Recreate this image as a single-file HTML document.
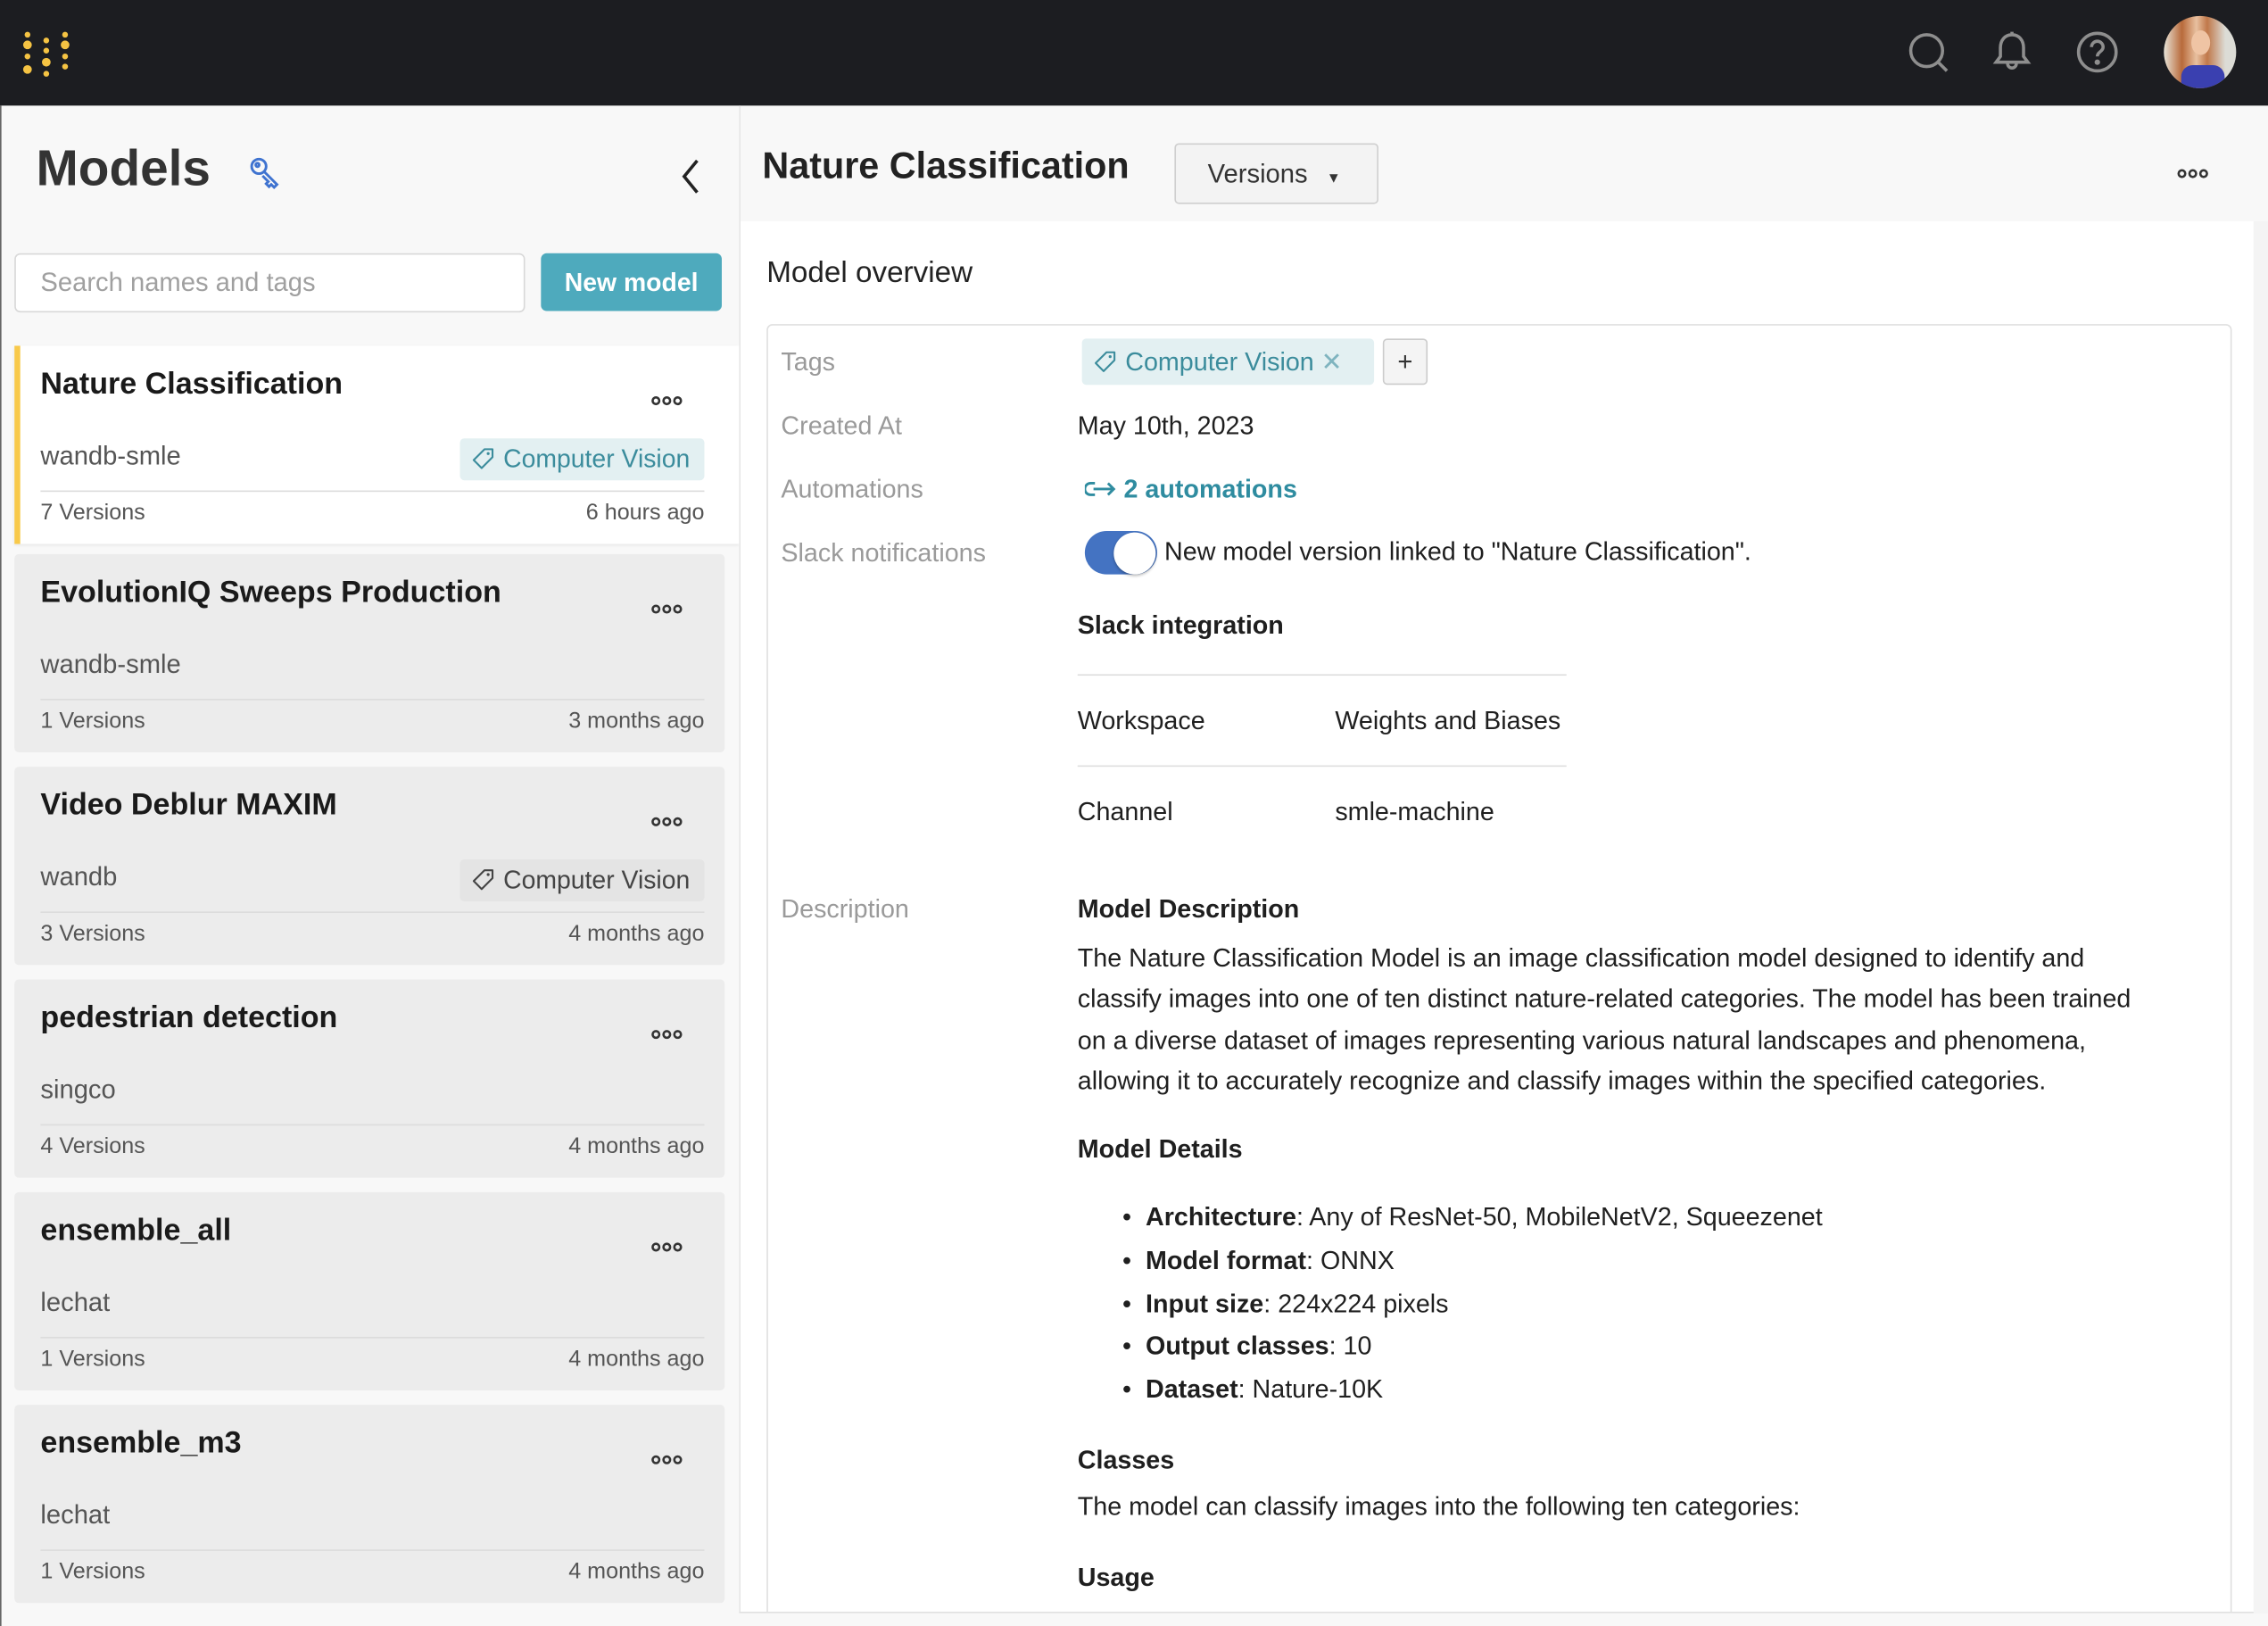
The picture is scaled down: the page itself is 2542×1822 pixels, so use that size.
<!DOCTYPE html>
<html><head><meta charset="utf-8"><style>
*{box-sizing:border-box;margin:0;padding:0}
html,body{width:2542px;height:1822px;overflow:hidden;background:#f8f8f8}
#w{position:absolute;left:0;top:0;width:1568px;height:1124px;transform:scale(1.62117);transform-origin:0 0;font-family:"Liberation Sans",sans-serif;color:#1a1a1a}
.a{position:absolute;white-space:nowrap}
.top{left:0;top:0;width:1568px;height:73px;background:#1c1d21}
.card{position:absolute;left:10px;width:491px;height:137px;background:#ececec;border-radius:3px}
.card .t{position:absolute;left:18px;top:15px;font-size:21px;font-weight:bold;color:#1a1a1a}
.card .d{position:absolute;right:29px;top:34px}
.card .o{position:absolute;left:18px;top:66px;font-size:18px;color:#555}
.card .ln{position:absolute;left:18px;right:14px;top:100px;border-top:1px solid #dcdcdc}
.card .v{position:absolute;left:18px;top:107px;font-size:15.5px;color:#555}
.card .tm{position:absolute;right:14px;top:107px;font-size:15.5px;color:#555}
.tag{position:absolute;right:14px;top:64px;height:29px;padding:0 10px 0 8px;font-size:17.5px;line-height:29px;border-radius:3px}
.lbl{position:absolute;left:540px;font-size:17.7px;color:#9a9a9a}
.val{position:absolute;left:745px;font-size:17.7px;color:#1f1f1f;white-space:nowrap}
b{font-weight:bold}
.ti{display:inline-block;width:16px;height:16px;vertical-align:-2px;margin-right:6px}
</style></head><body><div id="w">
<svg width="0" height="0" style="position:absolute"><defs>
<symbol id="dots" viewBox="0 0 22 8"><g fill="none" stroke="#333" stroke-width="1.6"><circle cx="3.5" cy="4" r="2.3"/><circle cx="11" cy="4" r="2.3"/><circle cx="18.5" cy="4" r="2.3"/></g></symbol>
<symbol id="tg" viewBox="0 0 16 16"><path d="M9 1.5h5.5V7L7 14.5 1.5 9z" fill="none" stroke="currentColor" stroke-width="1.3" stroke-linejoin="round" transform="rotate(0)"/><circle cx="11.5" cy="4.5" r="1" fill="currentColor"/></symbol>
</defs></svg>
<div class="a top"></div>
<svg class="a" style="left:14px;top:20px" width="36" height="34" viewBox="0 0 36 34">
<g fill="#f5c343"><circle cx="5" cy="4" r="2"/><circle cx="5" cy="11" r="3"/><circle cx="5" cy="19" r="2"/><circle cx="5" cy="28" r="3"/>
<circle cx="18" cy="8" r="2"/><circle cx="18" cy="15" r="2"/><circle cx="18" cy="23" r="3"/><circle cx="18" cy="31" r="2"/>
<circle cx="31" cy="4" r="2"/><circle cx="31" cy="11" r="3"/><circle cx="31" cy="19" r="2"/><circle cx="31" cy="26" r="2"/></g></svg>
<svg class="a" style="left:1318px;top:20px" width="32" height="32" viewBox="0 0 32 32" fill="none" stroke="#8e8e8e" stroke-width="2.2"><circle cx="14" cy="15" r="11"/><path d="M22 23l6 6"/></svg>
<svg class="a" style="left:1375px;top:20px" width="32" height="32" viewBox="0 0 32 32" fill="none" stroke="#8e8e8e" stroke-width="2.2"><path d="M16 4c-5 0-8 4-8 9v6l-3 4h22l-3-4v-6c0-5-3-9-8-9zM13 24a3 3 0 006 0M16 2v2"/></svg>
<svg class="a" style="left:1434px;top:20px" width="32" height="32" viewBox="0 0 32 32" fill="none" stroke="#8e8e8e" stroke-width="2.2"><circle cx="16" cy="16" r="13"/><path d="M12 12.5a4 4 0 118 0c0 3-4 3.5-4 6.5"/><circle cx="16" cy="23" r="0.8" fill="#8e8e8e"/></svg>
<div class="a" style="left:1496px;top:11px;width:50px;height:50px;border-radius:50%;overflow:hidden;background:linear-gradient(90deg,#e8e4d8 0%,#b86a3a 25%,#e8c0a0 45%,#c0784a 60%,#dcdcd6 85%)"><div style="position:absolute;left:12px;top:34px;width:30px;height:20px;background:#3a40b0;border-radius:8px 8px 0 0"></div><div style="position:absolute;left:19px;top:10px;width:13px;height:17px;background:#efc4a4;border-radius:50%"></div></div>

<div class="a" style="left:0;top:73px;width:1px;height:1051px;background:#666"></div>
<div class="a" style="left:25px;top:97px;font-size:35px;font-weight:bold;color:#333">Models</div>
<svg class="a" style="left:172px;top:108px" width="24" height="24" viewBox="0 0 24 24" fill="none" stroke="#3f73d0" stroke-width="1.8"><circle cx="7" cy="7" r="5"/><circle cx="6" cy="6" r="1.2"/><path d="M10.5 10.5l9 9-2 2-2-2-1.5 1.5-2-2 1.5-1.5-4-4"/></svg>
<svg class="a" style="left:468px;top:108px" width="20" height="28" viewBox="0 0 20 28" fill="none" stroke="#222" stroke-width="2.2"><path d="M14 3L5 14l9 11"/></svg>
<div class="a" style="left:10px;top:175px;width:353px;height:41px;background:#fff;border:1px solid #d8d8d8;border-radius:4px"></div>
<div class="a" style="left:28px;top:185px;font-size:18px;color:#a0a0a0">Search names and tags</div>
<div class="a" style="left:374px;top:175px;width:125px;height:40px;background:#4eaabd;border-radius:4px;color:#fff;font-size:17.5px;font-weight:bold;text-align:center;line-height:40px">New model</div>

<div class="card" style="top:239px;width:501px;background:#fff;border-left:4px solid #f8c94a;border-radius:0;box-shadow:0 1px 2px rgba(0,0,0,.08)">
<div class="t" style="left:14px">Nature Classification</div><svg class="d" style="right:39px" width="22" height="8"><use href="#dots"/></svg>
<div class="o" style="left:14px">wandb-smle</div>
<div class="tag" style="right:24px;background:#e3f0f2;color:#3b8c9c"><svg class="ti"><use href="#tg"/></svg>Computer Vision</div>
<div class="ln" style="left:14px;right:24px"></div>
<div class="v" style="left:14px">7 Versions</div><div class="tm" style="right:24px">6 hours ago</div></div>

<div class="card" style="top:383px"><div class="t">EvolutionIQ Sweeps Production</div><svg class="d" width="22" height="8"><use href="#dots"/></svg><div class="o">wandb-smle</div><div class="ln"></div><div class="v">1 Versions</div><div class="tm">3 months ago</div></div>
<div class="card" style="top:530px"><div class="t">Video Deblur MAXIM</div><svg class="d" width="22" height="8"><use href="#dots"/></svg><div class="o">wandb</div><div class="tag" style="background:#e4e4e4;color:#444"><svg class="ti"><use href="#tg"/></svg>Computer Vision</div><div class="ln"></div><div class="v">3 Versions</div><div class="tm">4 months ago</div></div>
<div class="card" style="top:677px"><div class="t">pedestrian detection</div><svg class="d" width="22" height="8"><use href="#dots"/></svg><div class="o">singco</div><div class="ln"></div><div class="v">4 Versions</div><div class="tm">4 months ago</div></div>
<div class="card" style="top:824px"><div class="t">ensemble_all</div><svg class="d" width="22" height="8"><use href="#dots"/></svg><div class="o">lechat</div><div class="ln"></div><div class="v">1 Versions</div><div class="tm">4 months ago</div></div>
<div class="card" style="top:971px"><div class="t">ensemble_m3</div><svg class="d" width="22" height="8"><use href="#dots"/></svg><div class="o">lechat</div><div class="ln"></div><div class="v">1 Versions</div><div class="tm">4 months ago</div></div>

<div class="a" style="left:511px;top:153px;width:1047px;height:962px;background:#fff"></div>
<div class="a" style="left:511px;top:73px;width:1px;height:1042px;background:#e6e6e6"></div>
<div class="a" style="left:527px;top:101px;font-size:25.5px;font-weight:bold;color:#222">Nature Classification</div>
<div class="a" style="left:812px;top:99px;width:141px;height:42px;background:#f3f3f3;border:1px solid #cfcfcf;border-radius:3px;font-size:18px;line-height:40px;padding-left:22px;color:#333">Versions <span style="font-size:10px;margin-left:8px">&#9660;</span></div>
<svg class="a" style="left:1505px;top:116px" width="22" height="8"><use href="#dots"/></svg>
<div class="a" style="left:530px;top:177px;font-size:20.5px;color:#222">Model overview</div>
<div class="a" style="left:530px;top:224px;width:1013px;height:900px;border:1px solid #e0e0e0;border-radius:4px"></div>

<div class="lbl" style="top:240px">Tags</div>
<div class="a" style="left:748px;top:234px;width:202px;height:32px;background:#e3f0f2;border-radius:3px;color:#3b8c9c;font-size:17.7px;line-height:32px;padding-left:8px"><svg class="ti"><use href="#tg"/></svg>Computer Vision <span style="color:#7fb4bf">&#10005;</span></div>
<div class="a" style="left:956px;top:234px;width:31px;height:32px;background:#f4f4f4;border:1px solid #ccc;border-radius:3px;text-align:center;line-height:30px;font-size:18px;color:#333">+</div>
<div class="lbl" style="top:284px">Created At</div><div class="val" style="top:284px">May 10th, 2023</div>
<div class="lbl" style="top:328px">Automations</div><div class="val" style="top:328px;left:750px;color:#2f8ca0;font-weight:bold"><svg width="22" height="14" style="vertical-align:-1px" viewBox="0 0 22 14" fill="none" stroke="#2f8ca0" stroke-width="1.8"><path d="M7 3H4a4 4 0 000 8h3M6 7h14M16 3l4 4-4 4"/></svg> 2 automations</div>
<div class="lbl" style="top:372px">Slack notifications</div>
<div class="a" style="left:750px;top:367px;width:50px;height:30px;background:#4473c2;border-radius:15px"></div>
<div class="a" style="left:770px;top:368px;width:29px;height:29px;background:#fff;border-radius:50%;box-shadow:0 1px 2px rgba(0,0,0,.3)"></div>
<div class="val" style="top:371px;left:805px">New model version linked to "Nature Classification".</div>
<div class="val" style="top:422px;font-weight:bold">Slack integration</div>
<div class="a" style="left:745px;top:466px;width:338px;border-top:1px solid #ddd"></div>
<div class="val" style="top:488px">Workspace</div><div class="val" style="top:488px;left:923px">Weights and Biases</div>
<div class="a" style="left:745px;top:529px;width:338px;border-top:1px solid #ddd"></div>
<div class="val" style="top:551px">Channel</div><div class="val" style="top:551px;left:923px">smle-machine</div>
<div class="lbl" style="top:618px">Description</div>
<div class="val" style="top:618px;font-weight:bold">Model Description</div>
<div class="val" style="top:648px;line-height:28.3px;font-size:17.7px">The Nature Classification Model is an image classification model designed to identify and<br>classify images into one of ten distinct nature-related categories. The model has been trained<br>on a diverse dataset of images representing various natural landscapes and phenomena,<br>allowing it to accurately recognize and classify images within the specified categories.</div>
<div class="val" style="top:784px;font-weight:bold">Model Details</div>
<div class="val" style="top:827px;left:776px;line-height:29.8px">&#8226;&nbsp; <b>Architecture</b>: Any of ResNet-50, MobileNetV2, Squeezenet<br>&#8226;&nbsp; <b>Model format</b>: ONNX<br>&#8226;&nbsp; <b>Input size</b>: 224x224 pixels<br>&#8226;&nbsp; <b>Output classes</b>: 10<br>&#8226;&nbsp; <b>Dataset</b>: Nature-10K</div>
<div class="val" style="top:999px;font-weight:bold">Classes</div>
<div class="val" style="top:1031px">The model can classify images into the following ten categories:</div>
<div class="val" style="top:1080px;font-weight:bold">Usage</div>
<div class="a" style="left:511px;top:1114px;width:1057px;height:10px;background:#f8f8f8;border-top:1px solid #e0e0e0"></div>
<div class="a" style="left:1558px;top:153px;width:10px;height:962px;background:#f4f4f4"></div>
</div></body></html>
